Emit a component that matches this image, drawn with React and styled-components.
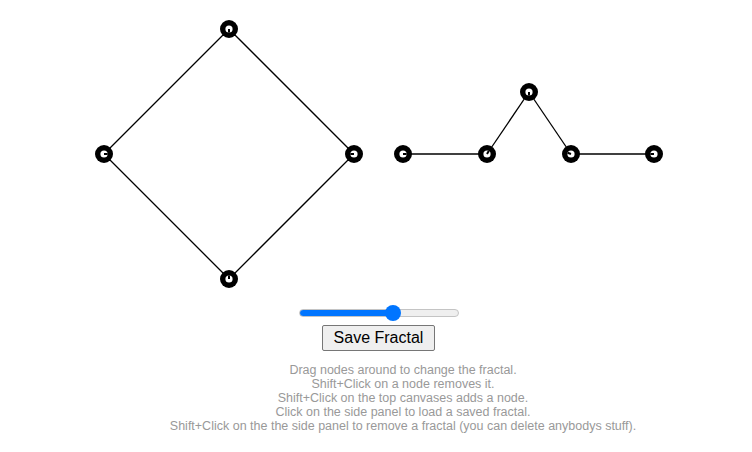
import styled, { createGlobalStyle } from 'styled-components';

const GlobalStyle = createGlobalStyle`
  body {
    margin: 0;
    background: #fff;
    font-family: "Liberation Sans", Arial, sans-serif;
  }
`;

const leftNodes = [
  { x: 150, y: 25, a: 90 },
  { x: 275, y: 150, a: 180 },
  { x: 150, y: 275, a: 270 },
  { x: 25, y: 150, a: 0 },
];
const leftEdges = [[0, 1], [1, 2], [2, 3], [3, 0]];

const rightNodes = [
  { x: 24, y: 150, a: 0 },
  { x: 108, y: 150, a: 300 },
  { x: 150, y: 88, a: 90 },
  { x: 192, y: 150, a: 200 },
  { x: 275, y: 150, a: 180 },
];
const rightEdges = [[0, 1], [1, 2], [2, 3], [3, 4]];

const help = [
  'Drag nodes around to change the fractal.',
  'Shift+Click on a node removes it.',
  'Shift+Click on the top canvases adds a node.',
  'Click on the side panel to load a saved fractal.',
  'Shift+Click on the the side panel to remove a fractal (you can delete anybodys stuff).',
];

const Node = ({ x, y, a }) => {
  const r = (a * Math.PI) / 180;
  return (
    <g>
      <circle cx={x} cy={y} r={9} fill="#000" />
      <circle cx={x} cy={y} r={3.6} fill="#fff" />
      <line
        x1={x}
        y1={y}
        x2={x + Math.cos(r) * 3.6}
        y2={y + Math.sin(r) * 3.6}
        stroke="#000"
        strokeWidth={2}
      />
    </g>
  );
};

const Fractal = ({ nodes, edges }) => (
  <Canvas width={300} height={300} viewBox="0 0 300 300">
    {edges.map(([i, j]) => (
      <line
        key={`${i}-${j}`}
        x1={nodes[i].x}
        y1={nodes[i].y}
        x2={nodes[j].x}
        y2={nodes[j].y}
        stroke="#000"
        strokeWidth={1.3}
      />
    ))}
    {nodes.map((n, i) => (
      <Node key={i} {...n} />
    ))}
  </Canvas>
);

const App = () => (
  <Page>
    <GlobalStyle />
    <CanvasRow>
      <Fractal nodes={leftNodes} edges={leftEdges} />
      <Fractal nodes={rightNodes} edges={rightEdges} />
    </CanvasRow>
    <Controls>
      <Slider type="range" min={0} max={100} defaultValue={60} $fill={60} />
      <SaveButton>Save Fractal</SaveButton>
    </Controls>
    <Help>
      {help.map((line) => (
        <div key={line}>{line}</div>
      ))}
    </Help>
  </Page>
);

const Page = styled.div`
  width: 752px;
  min-height: 452px;
`;

const CanvasRow = styled.div`
  display: flex;
  justify-content: center;
  padding: 4px 0 0 6px;
`;

const Canvas = styled.svg`
  display: block;
`;

const Controls = styled.div`
  display: flex;
  flex-direction: column;
  align-items: center;
  padding-left: 5px;
`;

const Slider = styled.input`
  -webkit-appearance: none;
  appearance: none;
  width: 160px;
  height: 16px;
  margin: 1px 0 2px;
  background: transparent;

  &::-webkit-slider-runnable-track {
    height: 8px;
    border-radius: 4px;
    box-sizing: border-box;
    border: 1px solid #c4c4c4;
    background: linear-gradient(
      to right,
      #0075ff 0,
      #0075ff ${(p) => p.$fill}%,
      #efefef ${(p) => p.$fill}%,
      #efefef 100%
    );
  }

  &::-webkit-slider-thumb {
    -webkit-appearance: none;
    width: 16px;
    height: 16px;
    margin-top: -5px;
    border-radius: 50%;
    background: #0075ff;
    border: none;
  }
`;

const SaveButton = styled.button`
  margin-top: 2px;
  font-family: "Liberation Sans", Arial, sans-serif;
  font-size: 16px;
  padding: 1px 11px;
  height: 26px;
  background: #efefef;
  border: 1px solid #767676;
  border-radius: 2px;
  color: #000;
`;

const Help = styled.div`
  margin-top: 12px;
  padding-left: 54px;
  text-align: center;
  font-size: 12.5px;
  line-height: 14px;
  color: #999;
`;

export default App;
